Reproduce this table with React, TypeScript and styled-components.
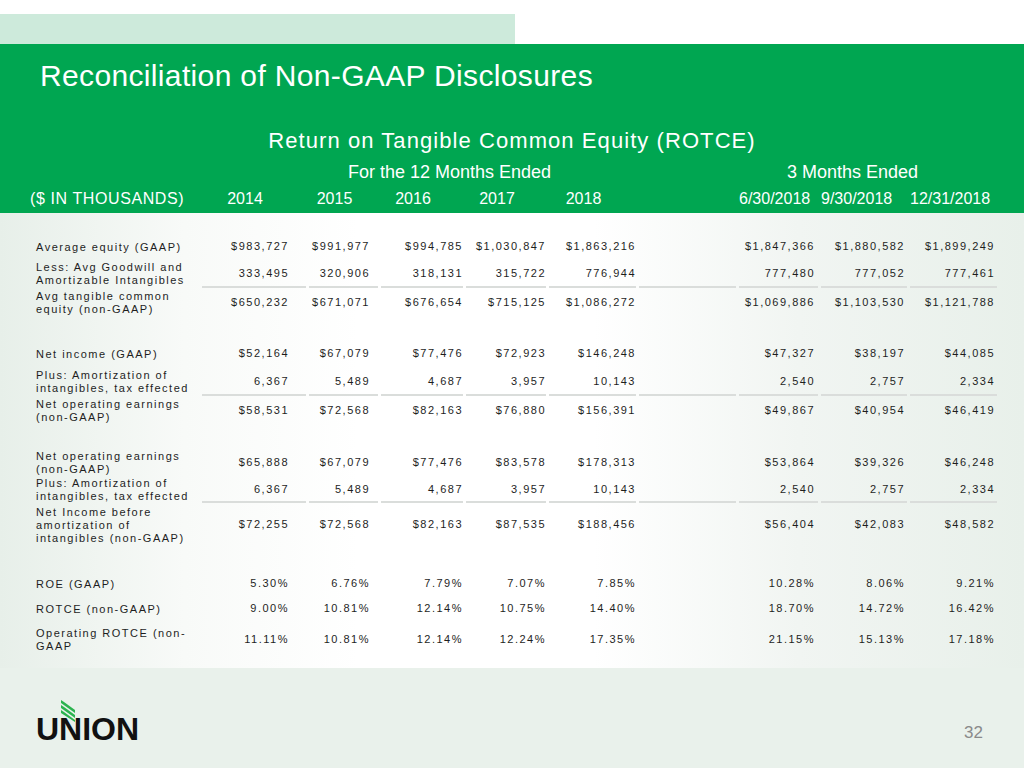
import * as React from 'react'
import styled, { createGlobalStyle } from 'styled-components'

// Slide 32 – ROTCE reconciliation table

const green = '#00a651'
const columns = '169px 104px 69px 82px 80px 87px 97px 79px 86px 87px'
// right padding of each value column (index 5 is the empty spacer column)
const numPad = [17, 8, 0, 0, 0, 0, 3, 2, 2]

type Row = {
  label: string[]
  values: string[]
  height: number
  rule?: boolean
}

type Block = { gap: number; rows: Row[] }

const blocks: Block[] = [
  {
    gap: 0,
    rows: [
      {
        label: ['Average equity (GAAP)'],
        values: ['$983,727', '$991,977', '$994,785', '$1,030,847', '$1,863,216', '$1,847,366', '$1,880,582', '$1,899,249'],
        height: 26,
      },
      {
        label: ['Less: Avg Goodwill and', 'Amortizable Intangibles'],
        values: ['333,495', '320,906', '318,131', '315,722', '776,944', '777,480', '777,052', '777,461'],
        height: 28,
        rule: true,
      },
      {
        label: ['Avg tangible common', 'equity (non-GAAP)'],
        values: ['$650,232', '$671,071', '$676,654', '$715,125', '$1,086,272', '$1,069,886', '$1,103,530', '$1,121,788'],
        height: 29,
      },
    ],
  },
  {
    gap: 24,
    rows: [
      {
        label: ['Net income (GAAP)'],
        values: ['$52,164', '$67,079', '$77,476', '$72,923', '$146,248', '$47,327', '$38,197', '$44,085'],
        height: 26,
      },
      {
        label: ['Plus: Amortization of', 'intangibles, tax effected'],
        values: ['6,367', '5,489', '4,687', '3,957', '10,143', '2,540', '2,757', '2,334'],
        height: 29,
        rule: true,
      },
      {
        label: ['Net operating earnings', '(non-GAAP)'],
        values: ['$58,531', '$72,568', '$82,163', '$76,880', '$156,391', '$49,867', '$40,954', '$46,419'],
        height: 29,
      },
    ],
  },
  {
    gap: 24,
    rows: [
      {
        label: ['Net operating earnings', '(non-GAAP)'],
        values: ['$65,888', '$67,079', '$77,476', '$83,578', '$178,313', '$53,864', '$39,326', '$46,248'],
        height: 28,
      },
      {
        label: ['Plus: Amortization of', 'intangibles, tax effected'],
        values: ['6,367', '5,489', '4,687', '3,957', '10,143', '2,540', '2,757', '2,334'],
        height: 26,
        rule: true,
      },
      {
        label: ['Net Income before', 'amortization of', 'intangibles (non-GAAP)'],
        values: ['$72,255', '$72,568', '$82,163', '$87,535', '$188,456', '$56,404', '$42,083', '$48,582'],
        height: 44,
      },
    ],
  },
  {
    gap: 24,
    rows: [
      {
        label: ['ROE (GAAP)'],
        values: ['5.30%', '6.76%', '7.79%', '7.07%', '7.85%', '10.28%', '8.06%', '9.21%'],
        height: 26,
      },
      {
        label: ['ROTCE (non-GAAP)'],
        values: ['9.00%', '10.81%', '12.14%', '10.75%', '14.40%', '18.70%', '14.72%', '16.42%'],
        height: 24,
      },
      {
        label: ['Operating ROTCE (non-', 'GAAP'],
        values: ['11.11%', '10.81%', '12.14%', '12.24%', '17.35%', '21.15%', '15.13%', '17.18%'],
        height: 37,
      },
    ],
  },
]

const headers = ['2014', '2015', '2016', '2017', '2018', '', '6/30/2018', '9/30/2018', '12/31/2018']

// put an empty spacer cell between the yearly and the quarterly values
function withSpacer(values: string[]) {
  return [...values.slice(0, 5), '', ...values.slice(5)]
}

export default function App() {
  return (
    <>
      <GlobalStyle />
      <Slide>
        <TopStrip>
          <TintBand />
        </TopStrip>

        <Header>
          <Title>Reconciliation of Non-GAAP Disclosures</Title>
          <Subtitle>Return on Tangible Common Equity (ROTCE)</Subtitle>
          <PeriodRow>
            <Period from={2} to={7} indent={146}>
              For the 12 Months Ended
            </Period>
            <Period from={8} to={11} indent={48}>
              3 Months Ended
            </Period>
          </PeriodRow>
          <HeadRow>
            <HeadLabel>($ IN THOUSANDS)</HeadLabel>
            {headers.map((h, i) => (
              <HeadCell key={i}>{h}</HeadCell>
            ))}
          </HeadRow>
        </Header>

        <Panel>
          {blocks.map((block, b) => (
            <TableBlock key={b} gap={block.gap}>
              {block.rows.map((row, r) => (
                <DataRow key={r} h={row.height}>
                  <Label>
                    {row.label.map((line, l) => (
                      <span key={l}>{line}</span>
                    ))}
                  </Label>
                  {withSpacer(row.values).map((v, i) => (
                    <Value key={i} pad={numPad[i]} rule={!!row.rule}>
                      {v}
                    </Value>
                  ))}
                </DataRow>
              ))}
            </TableBlock>
          ))}
        </Panel>

        <Footer>
          <Logo>
            <Leaf width="16" height="22" viewBox="0 0 16 22">
              <polygon points="1,0 4,2 15,10 15,13 1,3" fill="#2bb34f" />
              <polygon points="1,5 4,7 15,15 15,18 1,8" fill="#2bb34f" />
              <polygon points="1,10 4,12 15,20 15,22 1,13" fill="#2bb34f" />
            </Leaf>
            UNION
          </Logo>
          <PageNumber>32</PageNumber>
        </Footer>
      </Slide>
    </>
  )
}

const GlobalStyle = createGlobalStyle`
  *, *::before, *::after {
    box-sizing: border-box;
  }

  body {
    margin: 0;
    background: #fff;
    font-family: 'Liberation Sans', Arial, sans-serif;
  }
`

const Slide = styled.div`
  width: 1024px;
  height: 768px;
  display: flex;
  flex-direction: column;
  overflow: hidden;
  background: #e9f1eb;
`

const TopStrip = styled.div`
  height: 44px;
  padding-top: 14px;
  background: #fff;
`

const TintBand = styled.div`
  width: 515px;
  height: 30px;
  background: #cdeadb;
`

const Header = styled.div`
  height: 169px;
  padding-top: 12px;
  background: ${green};
  color: #fff;
`

const Title = styled.h1`
  margin: 0 0 0 40px;
  font-size: 30px;
  font-weight: 400;
  line-height: 40px;
  letter-spacing: 0.35px;
`

const Subtitle = styled.h2`
  margin: 30px 0 0;
  text-align: center;
  font-size: 22px;
  font-weight: 400;
  line-height: 30px;
  letter-spacing: 1.07px;
`

const PeriodRow = styled.div`
  display: grid;
  grid-template-columns: ${columns};
  column-gap: 3px;
  margin: 5px 0 0 30px;
  font-size: 18px;
  line-height: 22px;
`

const Period = styled.div<{ from: number; to: number; indent: number }>`
  grid-column: ${(p) => p.from} / ${(p) => p.to};
  padding-left: ${(p) => p.indent}px;
  white-space: nowrap;
`

const HeadRow = styled.div`
  display: grid;
  grid-template-columns: ${columns};
  column-gap: 3px;
  margin: 5px 0 0 30px;
  font-size: 16px;
  line-height: 22px;
`

const HeadLabel = styled.div`
  white-space: nowrap;
  letter-spacing: 0.6px;
`

const HeadCell = styled.div`
  text-align: center;
  padding-right: 18px;
  white-space: nowrap;
`

const Panel = styled.div`
  height: 455px;
  padding: 21px 0 10px 30px;
  background: linear-gradient(
    90deg,
    #e7efe9 0%,
    #f8faf8 18%,
    #ffffff 35%,
    #ffffff 58%,
    #f1f5f2 78%,
    #e8f0ea 100%
  );
  color: #1e1e1e;
  font-size: 11px;
  letter-spacing: 1.5px;
`

const TableBlock = styled.div<{ gap: number }>`
  margin-top: ${(p) => p.gap}px;
`

const DataRow = styled.div<{ h: number }>`
  display: grid;
  grid-template-columns: ${columns};
  column-gap: 3px;
  height: ${(p) => p.h}px;
`

const Label = styled.div`
  display: flex;
  flex-direction: column;
  justify-content: center;
  padding-left: 6px;
  line-height: 13px;
  white-space: nowrap;
`

const Value = styled.div<{ pad: number; rule: boolean }>`
  display: flex;
  align-items: center;
  justify-content: flex-end;
  padding-right: ${(p) => p.pad}px;
  border-bottom: 2px solid ${(p) => (p.rule ? '#dadddb' : 'transparent')};
  white-space: nowrap;
`

const Footer = styled.div`
  flex: 1;
  display: flex;
  align-items: flex-end;
  justify-content: space-between;
  padding: 0 41px 23px 36px;
`

const Logo = styled.div`
  position: relative;
  font-size: 32px;
  font-weight: 700;
  line-height: 32px;
  color: #111;
`

const Leaf = styled.svg`
  position: absolute;
  left: 24px;
  top: -13px;
`

const PageNumber = styled.div`
  margin-bottom: 2px;
  font-size: 17px;
  line-height: 20px;
  color: #8a8a8a;
`
